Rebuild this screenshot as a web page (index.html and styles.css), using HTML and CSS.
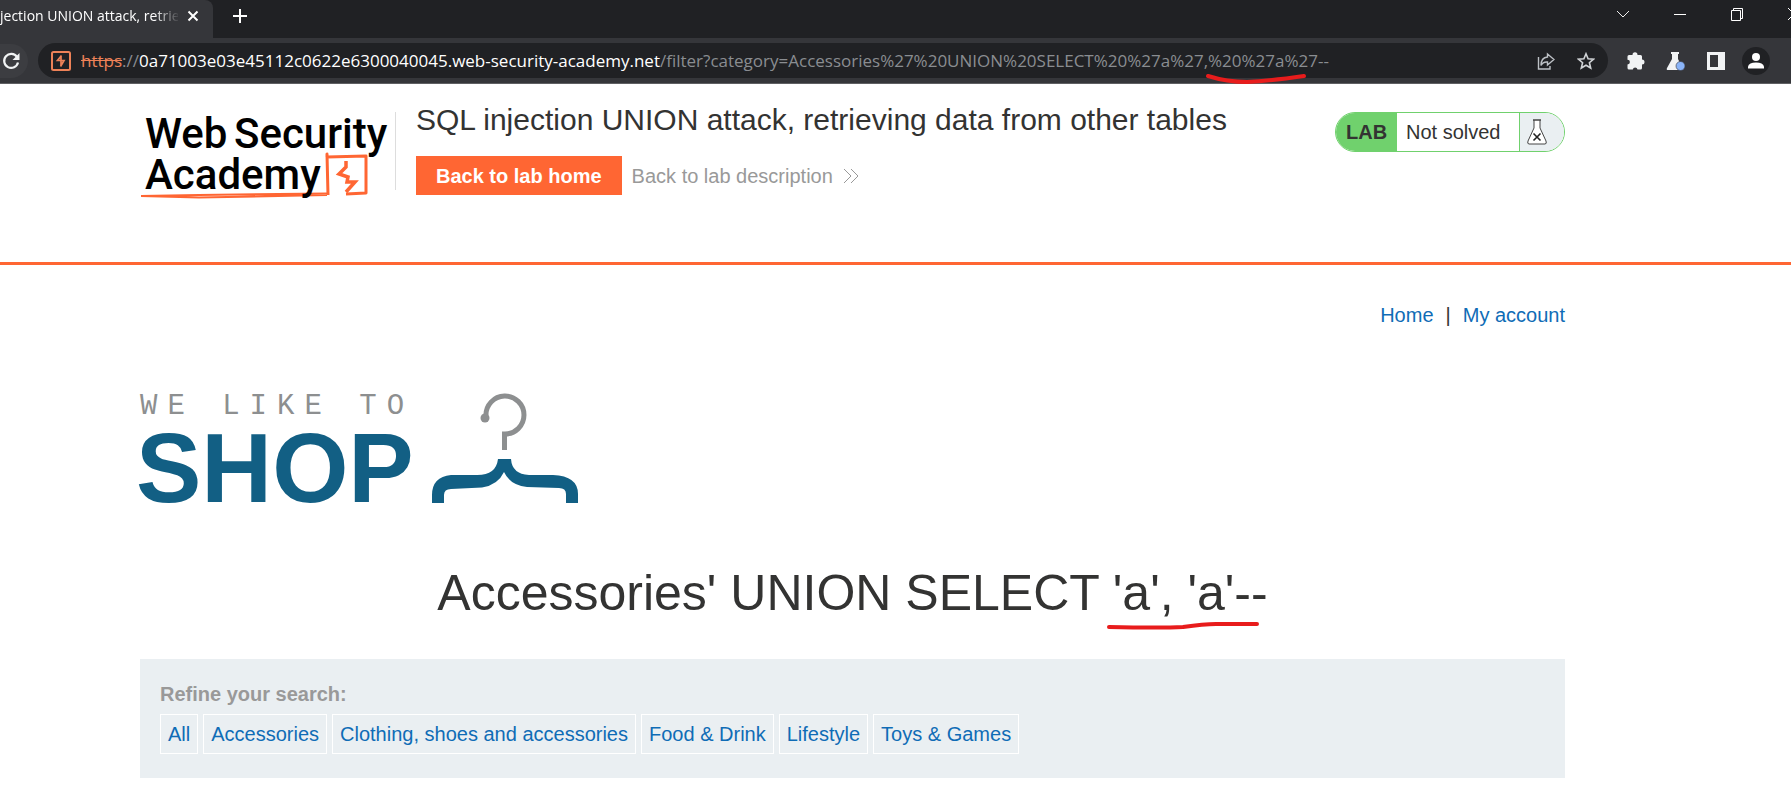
FILE: index.html
```html
<!DOCTYPE html>
<html lang="en">
<head>
<meta charset="utf-8">
<title>SQL injection UNION attack, retrieving data from other tables</title>
<link rel="stylesheet" href="styles.css">
</head>
<body>
<div class="browser">
  <div class="tabstrip">
    <div class="tab">
      <span class="tab-title">jection UNION attack, retrie</span>
      <button class="tab-close" aria-label="Close tab"><svg width="12" height="12" viewBox="0 0 12 12"><path d="M1.500 1.500 10.500 10.500M10.500 1.500 1.500 10.500" fill="none" stroke="#fff" stroke-width="2"/></svg></button>
    </div>
    <button class="new-tab" aria-label="New tab"><svg width="16" height="16" viewBox="0 0 16 16"><path d="M8 1V15M1 8H15" fill="none" stroke="#fff" stroke-width="2"/></svg></button>
    <div class="window-controls">
      <button aria-label="Search tabs"><svg width="14" height="14" viewBox="0 0 14 14"><path d="M1 4 7 10 13 4" fill="none" stroke="#eee"/></svg></button>
      <button aria-label="Minimize"><svg width="14" height="14" viewBox="0 0 14 14"><path d="M1 7.500H13" fill="none" stroke="#fff"/></svg></button>
      <button aria-label="Restore"><svg width="14" height="14" viewBox="0 0 14 14"><path d="M1.500 3.500H10.500V13.500H1.500ZM3.500 3.500V1.500H12.500V11.500H10.500" fill="none" stroke="#fff"/></svg></button>
      <button aria-label="Close"><svg width="14" height="14" viewBox="0 0 14 14"><path d="M1 1 13 13M13 1 1 13" fill="none" stroke="#fff"/></svg></button>
    </div>
  </div>
  <div class="toolbar">
    <button class="reload" aria-label="Reload"><svg width="18" height="18" viewBox="0 0 18 18"><path d="M15 5A7 7 0 1 0 16 10.500" fill="none" stroke="#f1f3f4" stroke-width="2.200"/><path d="M17.500 1V8H10.500Z" fill="#f1f3f4"/></svg></button>
    <div class="omnibox">
      <svg class="site-icon" width="20" height="20" viewBox="0 0 20 20"><rect x="1" y="1" width="18" height="18" rx="1.500" fill="none" stroke="#ee8258" stroke-width="2"/><path d="M10.500 4.500 6.500 9.500H13L9.500 15.500M10 5V9.500M10 9.500V15" fill="none" stroke="#ee8258" stroke-width="1.700"/></svg>
      <span class="url"><s>https</s>://<b>0a71003e03e45112c0622e6300040045.web-security-academy.net</b>/filter?category=Accessories%27%20UNION%20SELECT%20%27a%27,%20%27a%27--</span>
      <button class="box-action" aria-label="Share"><svg width="18" height="18" viewBox="0 0 18 18"><path d="M1.500 5V17H13V14M10.500 2 17 7.500 10.500 13V10Q6 9.500 4 13.500Q4 5.500 10.500 5Z" fill="none" stroke="#bdc1c6" stroke-width="1.400"/></svg></button>
      <button class="box-action" aria-label="Bookmark"><svg width="18" height="18" viewBox="0 0 18 18"><path d="M9 1.800 11.100 6.800 16.500 7.200 12.400 10.700 13.700 16 9 13.200 4.300 16 5.600 10.700 1.500 7.200 6.900 6.800Z" fill="none" stroke="#d0d3d6" stroke-width="1.600"/></svg></button>
    </div>
    <button class="tool" aria-label="Extensions"><svg width="20" height="20" viewBox="0 0 20 20"><path d="M6.500 4A2.500 2.800 0 0 1 11.500 4H14.500Q16 4 16 5.500V8.500A2.500 2.500 0 0 1 16 13.500V17Q16 18.500 14.500 18.500H11.500A2.400 2.400 0 0 0 6.800 18.500H3Q1.500 18.500 1.500 17V13.500A2.400 2.400 0 0 0 1.500 8.700V5.500Q1.500 4 3 4Z" fill="#f1f3f4"/></svg></button>
    <button class="tool" aria-label="Labs"><svg width="20" height="20" viewBox="0 0 20 20"><path d="M5 1H13V3H12V8L16.500 17Q17 19 15 19H2Q0 19 1 17L6 8V3H5Z" fill="#f1f3f4"/><circle cx="14.500" cy="15" r="4.500" fill="#8ab4f8" stroke="#35363a" stroke-width=".6"/></svg></button>
    <button class="tool" aria-label="Side panel"><svg width="20" height="20" viewBox="0 0 20 20"><path d="M1 1H19V19H1ZM4 4V16H12V4Z" fill="#f1f3f4" fill-rule="evenodd"/></svg></button>
    <button class="tool profile" aria-label="Profile"><svg width="28" height="28" viewBox="0 0 28 28"><circle cx="14" cy="14" r="14" fill="#202124"/><circle cx="14" cy="10" r="4" fill="#fff"/><path d="M6 21.500V19.500Q7 15.500 14 15.500T22 19.500V21.500Z" fill="#fff"/></svg></button>
  </div>
  <svg class="mark mark-url" width="104" height="14" viewBox="0 0 104 14"><path d="M5 4Q24 10 44 10Q66 9 101 4" fill="none" stroke="#e81c1c" stroke-width="4" stroke-linecap="round"/></svg>
</div>

<header class="lab-header">
  <a class="academy-logo" href="#" aria-label="Web Security Academy">
    <svg width="250" height="88" viewBox="0 0 250 88">
      <path d="M1 84 59 85.500 187 83M1 84 59 83 187 81.500" fill="none" stroke="#ff6633" stroke-width="2"/>
      <path d="M188 83 187 42 187 45 226 44 226 81 206 82" fill="none" stroke="#ff6633" stroke-width="3" stroke-linejoin="round"/>
      <path d="M206 49 206 55 199 62 208 65 207 70 215 70 206 80" fill="none" stroke="#ff6633" stroke-width="3.500"/>
      <text class="logo-word" x="5" y="36">Web</text>
      <text class="logo-word" x="94" y="36">Security</text>
      <text class="logo-word" x="5" y="77">Academy</text>
    </svg>
  </a>
  <div class="lab-info">
    <h2>SQL injection UNION attack, retrieving data from other tables</h2>
    <div class="lab-links">
      <a class="lab-home" href="#">Back to lab home</a>
      <a class="lab-description" href="#">Back to lab description <svg width="16" height="16" viewBox="0 0 16 16"><path d="M1 1 8 8 1 15M8 1 15 8 8 15" fill="none" stroke="#999"/></svg></a>
    </div>
  </div>
  <div class="lab-status">
    <strong>LAB</strong>
    <span class="status-text">Not solved</span>
    <span class="status-icon"><svg width="20" height="26" viewBox="0 0 20 26"><path d="M7 1V9L1 22Q0 25 2 25H18Q20 25 19 22L13 9V1" fill="#fff" stroke="#444"/><path d="M6 1H14" stroke="#444" stroke-width="1.500"/><path d="M6.500 14.500 13.500 21.500M13.500 14.500 6.500 21.500" stroke="#222" stroke-width="1.600"/></svg></span>
  </div>
</header>

<main class="page">
  <nav class="top-links"><a href="#">Home</a><span>|</span><a href="#">My account</a></nav>
  <div class="shop-brand">
    <div class="shop-words"><span class="tagline">WE LIKE TO</span><span class="shop">SHOP</span></div>
    <svg width="148" height="110" viewBox="0 0 148 110"><path d="M55 23A19 19 0 1 1 73.500 41V57" fill="none" stroke="#8d8f90" stroke-width="5"/><circle cx="54" cy="25" r="4.500" fill="#8d8f90"/><path d="M67 66H80Q81 81 98 82H122Q147 83 147 101V110H135V101Q135 95 128 95L96 94Q79 92 73 79Q67 92 51 94.500L20 96Q13 96 13 102V110H1V102Q1 84 20 82H44Q65 83 67 66Z" fill="#125f84"/></svg>
  </div>
  <div class="category">
    <h1>Accessories' UNION SELECT 'a', 'a'--</h1>
    <svg class="mark mark-title" width="156" height="12" viewBox="0 0 156 12"><path d="M3 8Q55 9 77 8Q98 5 110 5H151" fill="none" stroke="#e81c1c" stroke-width="4" stroke-linecap="round"/></svg>
  </div>
  <section class="filters">
    <span class="filters-label">Refine your search:</span>
    <div class="filter-list">
      <a href="#">All</a>
      <a href="#">Accessories</a>
      <a href="#">Clothing, shoes and accessories</a>
      <a href="#">Food &amp; Drink</a>
      <a href="#">Lifestyle</a>
      <a href="#">Toys &amp; Games</a>
    </div>
  </section>
</main>
</body>
</html>
```
FILE: styles.css
```css
* { box-sizing: border-box; }
body {
  margin: 0;
  background: #fff;
  color: #333332;
  font: 20px/24px "Liberation Sans", Arial, sans-serif;
}
a { color: #0f6cb6; text-decoration: none; }
button {
  display: flex;
  align-items: center;
  justify-content: center;
  flex: none;
  padding: 0;
  border: 0;
  background: none;
}
svg { display: block; flex: none; }

.browser { position: relative; color: #fff; }
.tabstrip { display: flex; height: 38px; background: #202124; overflow: hidden; }
.tab {
  display: flex;
  align-items: center;
  width: 213px;
  padding-bottom: 6px;
  background: #35363a;
  border-radius: 0 8px 0 0;
}
.tab-title {
  width: 178px;
  overflow: hidden;
  white-space: nowrap;
  font: 14px/20px "Open Sans", "Noto Sans", sans-serif;
  -webkit-mask-image: linear-gradient(90deg, #000 154px, transparent 180px);
  mask-image: linear-gradient(90deg, #000 154px, transparent 180px);
}
.tab-close { width: 30px; height: 24px; }
.new-tab { width: 54px; height: 32px; }
.window-controls { display: flex; margin-left: auto; margin-right: -31px; }
.window-controls button { width: 57px; height: 28px; }

.toolbar {
  display: flex;
  align-items: center;
  height: 46px;
  padding-right: 15px;
  background: #35363a;
  border-bottom: 1px solid #5f6063;
}
.reload { width: 28px; height: 34px; margin-right: 10px; padding-right: 6px; border-radius: 0 17px 17px 0; background: #3c3d41; }
.omnibox {
  display: flex;
  align-items: center;
  flex: 1;
  min-width: 0;
  height: 35px;
  margin-right: 8px;
  padding: 0 2px 0 13px;
  border-radius: 18px;
  background: #202124;
}
.url {
  flex: 1;
  min-width: 0;
  margin-left: 10px;
  overflow: hidden;
  white-space: nowrap;
  color: #8a8d91;
  font: 17px/24px "Open Sans", "Noto Sans", sans-serif;
}
.url b { font-weight: 400; color: #fff; }
.url s { color: #ee8258; }
.box-action { width: 40px; height: 30px; }
.tool { width: 40px; height: 30px; }

.mark { position: absolute; pointer-events: none; }
.mark-url { left: 1203px; top: 72px; }
.mark-title { right: 303px; bottom: -8px; }

.lab-header {
  display: flex;
  align-items: flex-start;
  padding: 28px 226px 67px 140px;
  border-bottom: 3px solid #ff6633;
}
.academy-logo { width: 256px; height: 78px; border-right: 1px solid #ddd; }
.academy-logo svg { overflow: visible; }
.logo-word { font: 500 42px Roboto, sans-serif; fill: #000; }
.lab-info { flex: 1; padding-left: 20px; }
.lab-info h2 { margin: -10px 0 18px; font-size: 30px; line-height: 36px; font-weight: 400; }
.lab-links { display: flex; align-items: center; gap: 10px; }
.lab-home { padding: 8px 20px 7px; background: #ff6633; color: #fff; font-weight: 700; }
.lab-description { display: flex; align-items: center; gap: 10px; color: #999; }
.lab-status {
  display: flex;
  width: 230px;
  height: 40px;
  overflow: hidden;
  border: 1px solid #70d16d;
  border-radius: 20px;
  line-height: 38px;
}
.lab-status strong { width: 61px; padding-left: 10px; background: #70d16d; }
.status-text { flex: 1; padding-left: 9px; }
.status-icon { display: flex; align-items: center; width: 45px; padding-left: 7px; border-left: 1px solid #70d16d; background: #eaeff2; }

.page { padding: 38px 226px 0 140px; }
.top-links { display: flex; justify-content: flex-end; gap: 12px; }
.shop-brand { display: flex; align-items: flex-start; gap: 18px; margin-top: 66px; }
.shop-words { display: flex; flex-direction: column; width: 273px; }
.tagline { margin-top: 2px; color: #8d8f90; font: 29px/24px "Liberation Mono", monospace; letter-spacing: 10px; white-space: nowrap; }
.shop { color: #125f84; font-size: 98px; line-height: 86px; font-weight: 700; margin-top: 6px; margin-left: -4px; }
.category { position: relative; margin-top: 52px; }
.category h1 { margin: 0; font-size: 50px; line-height: 60px; font-weight: 400; text-align: center; }
.filters { margin-top: 36px; padding: 23px 20px 24px; background: #eaeff2; }
.filters-label { display: block; margin-bottom: 8px; color: #999; font-weight: 700; }
.filter-list { display: flex; flex-wrap: wrap; gap: 5px; }
.filter-list a { padding: 7px; border: 1px solid #fff; }
```
